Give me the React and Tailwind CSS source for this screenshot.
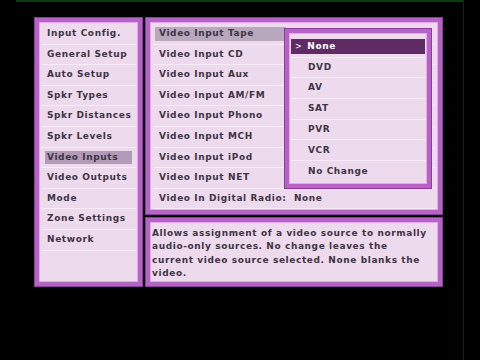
import React from 'react';

const menu = [
  'Input Config.',
  'General Setup',
  'Auto Setup',
  'Spkr Types',
  'Spkr Distances',
  'Spkr Levels',
  'Video Inputs',
  'Video Outputs',
  'Mode',
  'Zone Settings',
  'Network',
];

const inputs = [
  'Video Input Tape',
  'Video Input CD',
  'Video Input Aux',
  'Video Input AM/FM',
  'Video Input Phono',
  'Video Input MCH',
  'Video Input iPod',
  'Video Input NET',
  'Video In Digital Radio:  None',
];

const options = ['None', 'DVD', 'AV', 'SAT', 'PVR', 'VCR', 'No Change'];

const help = [
  'Allows assignment of a video source to normally',
  'audio-only sources. No change leaves the',
  'current video source selected. None blanks the',
  'video.',
];

const font = "font-['DejaVu_Sans',Verdana,sans-serif] font-bold text-[9px] tracking-[0.6px] text-[#3e3444]";

// purple bevelled frame used by all osd panels
const Frame = ({ className = '', innerClass = '', children }) => (
  <div className={`bg-[#b464c4] border border-[#8c3c9c] p-[4px] ${className}`}>
    <div className={`h-full bg-[#eddaed] border border-[#e6a8e8] ${innerClass}`}>{children}</div>
  </div>
);

export default function App() {
  return (
    <div className={`relative w-[480px] h-[360px] bg-black overflow-hidden ${font}`}>
      <div className="h-[2px] ml-[16px] w-[447px] bg-[#0d3a12]" />
      <div className="absolute left-[463px] top-0 w-[1px] h-full bg-[#15241a]" />

      <div className="flex gap-[2px] pl-[34px] pt-[15px]">
        {/* left menu */}
        <Frame className="w-[109px] h-[270px]" innerClass="pt-[1px] px-[1px]">
          {menu.map((m) => (
            <div key={m} className="h-[20.6px] flex items-center border-b border-[#f6ecf6] px-[4px]">
              {m === 'Video Inputs' ? (
                <div className="w-full h-[13px] bg-[#b29bb6] flex items-center pl-[2px]">{m}</div>
              ) : (
                <div className="pl-[2px]">{m}</div>
              )}
            </div>
          ))}
        </Frame>

        <div className="flex flex-col gap-[2px]">
          {/* inputs list */}
          <Frame className="w-[298px] h-[198px]" innerClass="relative pt-[1px] px-[2px]">
            {inputs.map((r, i) => (
              <div key={r} className="h-[20.6px] flex items-center border-b border-[#f6ecf6] last:border-b-0 px-[2px]">
                {i === 0 ? (
                  <div className="w-[131px] h-[14px] bg-[#b8a8bc] flex items-center pl-[4px]">{r}</div>
                ) : (
                  <div className="pl-[4px] whitespace-pre">{r}</div>
                )}
              </div>
            ))}

            {/* dropdown */}
            <div className="absolute left-[133px] top-[5px] w-[148px] h-[161px] bg-[#b464c4] border border-[#8c3c9c] p-[4px]">
              <div className="h-full bg-[#eddaed] border border-[#e6a8e8] px-[1px] pt-[3px]">
                {options.map((o, i) => (
                  <div key={o} className="h-[20.7px] flex items-center border-b border-[#f6ecf6] last:border-b-0">
                    {i === 0 ? (
                      <div className="w-full h-[15px] bg-[#5e2c62] text-white flex items-center pl-[4px]">
                        <span className="mr-[5px] font-normal text-[8px]">&gt;</span>
                        {o}
                      </div>
                    ) : (
                      <div className="pl-[17px]">{o}</div>
                    )}
                  </div>
                ))}
              </div>
            </div>
          </Frame>

          {/* help text */}
          <Frame className="w-[298px] h-[70px]" innerClass="px-[1px] pt-[4px] leading-[13.4px]">
            {help.map((l) => (
              <div key={l}>{l}</div>
            ))}
          </Frame>
        </div>
      </div>
    </div>
  );
}
